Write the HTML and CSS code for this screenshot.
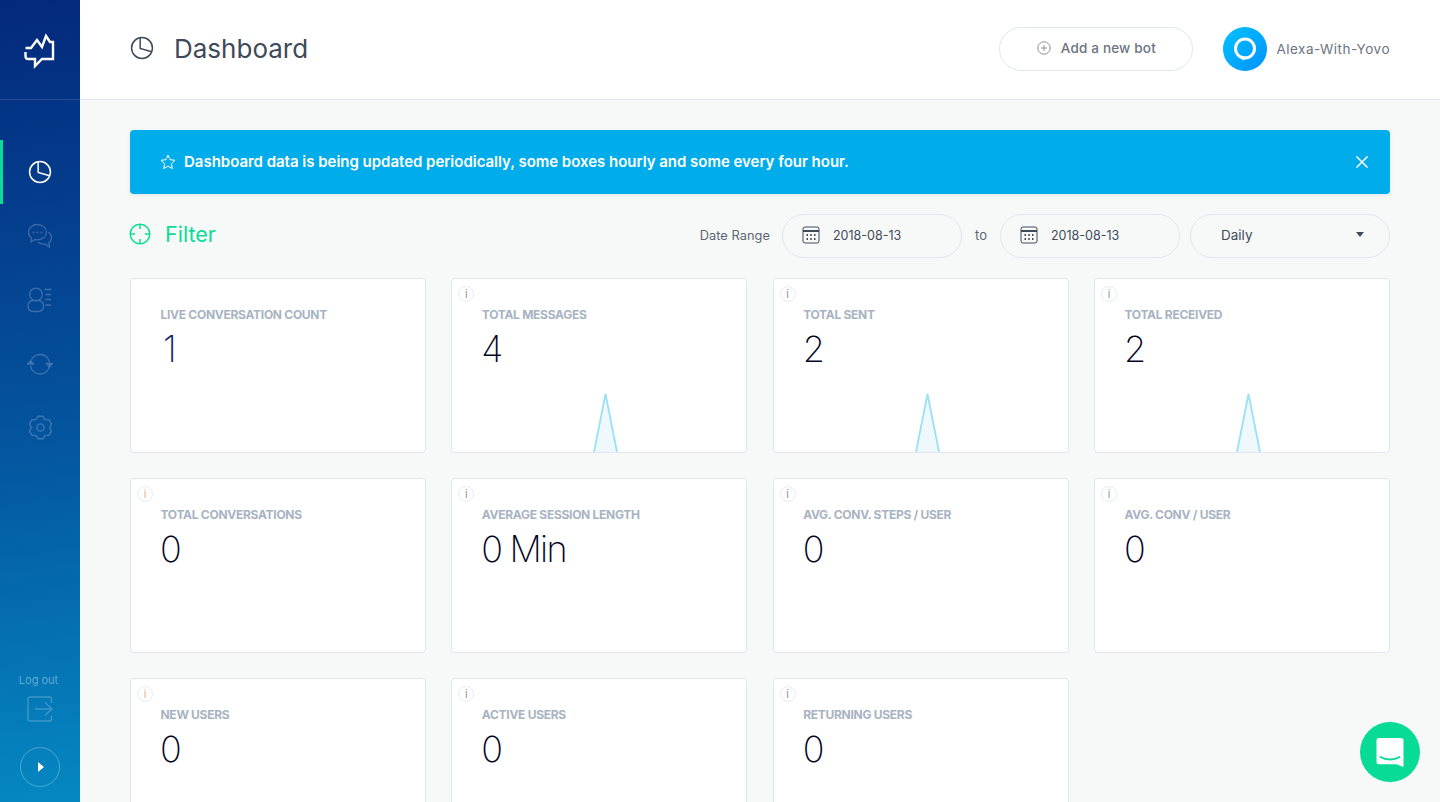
FILE: index.html
```html
<!DOCTYPE html>
<html lang="en">
<head>
<meta charset="utf-8">
<title>Dashboard</title>
<link rel="stylesheet" href="styles.css">
</head>
<body>
<div class="app">
  <aside class="sidebar">
    <div class="logo">
      <svg width="32" height="36" viewBox="0 0 32 36" fill="none" stroke="#fff" stroke-width="2.400" stroke-linejoin="miter"><path d="M1.500 15H7L13 7 18 14 22 3 26 9H29V26H18L11 33V26H4.500Q1.500 26 1.500 23V19"/></svg>
    </div>
    <nav class="nav">
      <a class="nav-item active"><svg width="24" height="24" viewBox="0 0 26 26" fill="none" stroke="#fff" stroke-width="1.600"><circle cx="13" cy="13" r="11.300"/><path d="M11 2v11.500L23.500 17"/></svg></a>
      <a class="nav-item dim"><svg width="26" height="26" viewBox="0 0 26 26" fill="none" stroke="#fff" stroke-width="1.300"><path d="M10.500 1.500C5.500 1.500 1.500 5 1.500 9.300c0 2.300 1.100 4.300 3 5.800l-.5 3.900 4-2.500c.8.200 1.600.3 2.500.3 5 0 9-3.400 9-7.500s-4-7.800-9-7.800z"/><path d="M21.500 9c2 1.400 3 3.300 3 5.500 0 2-1 3.800-2.500 5l.5 4.500-4.500-3c-2.500.3-5-.3-7-2"/><circle cx="6.500" cy="9.500" r=".4"/><circle cx="10.500" cy="9.500" r=".4"/><circle cx="14.500" cy="9.500" r=".4"/></svg></a>
      <a class="nav-item dim"><svg width="26" height="26" viewBox="0 0 26 26" fill="none" stroke="#fff" stroke-width="1.300"><circle cx="9" cy="7.500" r="6.300"/><rect x="1" y="13.500" width="15.500" height="11" rx="5"/><path d="M17.500 2.500h7M18.500 7.500h5.500M18.500 12.500h5.500M18.500 18h5.500"/></svg></a>
      <a class="nav-item dim"><svg width="26" height="26" viewBox="0 0 26 26" fill="none" stroke="#fff" stroke-width="1.300"><path d="M3.500 12C4 7 8 3.500 13 3.500c3.500 0 6.500 1.800 8.200 4.500l1.300 3.500M22.500 14.500c-.5 5-4.500 8.500-9.500 8.500-3.500 0-6.500-1.800-8.200-4.500L3.500 15"/><path d="M.8 13 3.500 10 6.500 13zM19.500 12.500h6L22.500 16z" fill="#fff"/></svg></a>
      <a class="nav-item dim gear"><svg width="25" height="25" viewBox="0 0 26 26" fill="none" stroke="#fff" stroke-width="1.400" stroke-linejoin="round"><circle cx="13" cy="13" r="3.700"/><path d="M10.500 1.260H15.500L17.750 4.770 21.920 4.970 24.410 9.290 22.500 13 24.410 16.710 21.920 21.030 17.750 21.230 15.500 24.740H10.500L8.250 21.230 4.080 21.030 1.590 16.710 3.500 13 1.590 9.290 4.080 4.970 8.250 4.770z"/></svg></a>
    </nav>
    <div class="side-foot">
      <span class="logout-label">Log out</span>
      <svg class="logout-ico" width="26" height="26" viewBox="0 0 26 26" fill="none" stroke="#fff" stroke-width="1.400"><path d="M24.500 7V3a2 2 0 0 0-2-2H3a2 2 0 0 0-2 2v20a2 2 0 0 0 2 2h19.500a2 2 0 0 0 2-2v-3"/><path d="M8 13h17M18 6.500l7 6.500-7 6.500"/></svg>
      <button class="expand"><svg width="8" height="10" viewBox="0 0 8 10"><path d="M1 0l6 5-6 5z" fill="#fff"/></svg></button>
    </div>
  </aside>
  <div class="content">
    <header class="topbar">
      <svg class="page-ico" width="24" height="24" viewBox="0 0 26 26" fill="none" stroke="#3e4a59" stroke-width="1.600"><circle cx="13" cy="13" r="11.300"/><path d="M11 2v11.500L23.500 17"/></svg>
      <h1 class="title">Dashboard</h1>
      <button class="add-bot"><svg width="14" height="14" viewBox="0 0 14 14" fill="none" stroke="#8a929c"><circle cx="7" cy="7" r="6.200"/><path d="M7 4v6M4 7h6"/></svg><span>Add a new bot</span></button>
      <div class="account">
        <span class="avatar"><svg width="26" height="28" viewBox="0 0 26 28" fill="none"><circle cx="13" cy="13.500" r="9.500" stroke="#fff" stroke-width="3"/><path d="M9.500 20.500 10.500 25.500 16 22.500z" fill="#fff"/></svg></span>
        <span class="account-name">Alexa-With-Yovo</span>
      </div>
    </header>
    <main class="main">
      <div class="banner">
        <svg width="16" height="16" viewBox="0 0 16 16" fill="none" stroke="#fff" stroke-width="1"><path d="M8 1.200l2.100 4.500 4.900.6-3.600 3.400.9 4.900L8 12.200l-4.300 2.400.9-4.900L1 6.300l4.900-.6z"/></svg>
        <span class="banner-text">Dashboard data is being updated periodically, some boxes hourly and some every four hour.</span>
        <svg class="banner-close" width="14" height="14" viewBox="0 0 14 14" stroke="#fff" stroke-width="1.500"><path d="M1.500 1.500l11 11M12.500 1.500l-11 11"/></svg>
      </div>
      <div class="filter-row">
        <svg class="filter-ico" width="22" height="22" viewBox="0 0 22 22" fill="none" stroke="#0cdc97" stroke-width="1.500"><circle cx="11" cy="11" r="9.800"/><path d="M11 1v5M11 16v5M1 11h5M16 11h5"/></svg>
        <span class="filter-label">Filter</span>
        <span class="range-label">Date Range</span>
        <div class="pill date"><svg class="cal" width="18" height="18" viewBox="0 0 18 18" fill="none" stroke="#3e4a59"><rect x="1" y="1" width="16" height="16" rx="2"/><path d="M1 5h16" stroke-width="2"/><path d="M4.500 9h1.500M8.250 9h1.500M12 9h1.500M4.500 13h1.500M8.250 13h1.500M12 13h1.500" stroke-width="1.800"/></svg><span>2018-08-13</span></div>
        <span class="to">to</span>
        <div class="pill date"><svg class="cal" width="18" height="18" viewBox="0 0 18 18" fill="none" stroke="#3e4a59"><rect x="1" y="1" width="16" height="16" rx="2"/><path d="M1 5h16" stroke-width="2"/><path d="M4.500 9h1.500M8.250 9h1.500M12 9h1.500M4.500 13h1.500M8.250 13h1.500M12 13h1.500" stroke-width="1.800"/></svg><span>2018-08-13</span></div>
        <div class="pill select"><span>Daily</span><i class="caret"></i></div>
      </div>
      <section class="cards">
        <article class="card"><h2 class="card-title">LIVE CONVERSATION COUNT</h2><div class="card-value indigo">1</div></article>
        <article class="card"><i class="info">i</i><h2 class="card-title">TOTAL MESSAGES</h2><div class="card-value">4</div><svg class="spark" width="294" height="60" viewBox="0 0 294 60"><path d="M142 60 153.500 2 165 60z" fill="#eff9fd"/><path d="M142 60 153.500 2 165 60" fill="none" stroke="#98e1f6" stroke-width="1.800"/></svg></article>
        <article class="card"><i class="info">i</i><h2 class="card-title">TOTAL SENT</h2><div class="card-value">2</div><svg class="spark" width="294" height="60" viewBox="0 0 294 60"><path d="M142 60 153.500 2 165 60z" fill="#eff9fd"/><path d="M142 60 153.500 2 165 60" fill="none" stroke="#98e1f6" stroke-width="1.800"/></svg></article>
        <article class="card"><i class="info">i</i><h2 class="card-title">TOTAL RECEIVED</h2><div class="card-value">2</div><svg class="spark" width="294" height="60" viewBox="0 0 294 60"><path d="M142 60 153.500 2 165 60z" fill="#eff9fd"/><path d="M142 60 153.500 2 165 60" fill="none" stroke="#98e1f6" stroke-width="1.800"/></svg></article>
        <article class="card"><i class="info warm">i</i><h2 class="card-title">TOTAL CONVERSATIONS</h2><div class="card-value">0</div></article>
        <article class="card"><i class="info">i</i><h2 class="card-title">AVERAGE SESSION LENGTH</h2><div class="card-value">0 Min</div></article>
        <article class="card"><i class="info">i</i><h2 class="card-title">AVG. CONV. STEPS / USER</h2><div class="card-value">0</div></article>
        <article class="card"><i class="info">i</i><h2 class="card-title">AVG. CONV / USER</h2><div class="card-value">0</div></article>
        <article class="card"><i class="info warm">i</i><h2 class="card-title">NEW USERS</h2><div class="card-value">0</div></article>
        <article class="card"><i class="info">i</i><h2 class="card-title">ACTIVE USERS</h2><div class="card-value">0</div></article>
        <article class="card"><i class="info">i</i><h2 class="card-title">RETURNING USERS</h2><div class="card-value">0</div></article>
      </section>
    </main>
  </div>
</div>
<button class="chat"><svg width="28" height="30" viewBox="0 0 28 30"><path d="M3 1h22a2.500 2.500 0 0 1 2.500 2.500V30l-7-2.800H3A2.500 2.500 0 0 1 .5 24.700V3.500A2.500 2.500 0 0 1 3 1z" fill="#fff"/><path d="M4.500 20c5.500 3.300 13.500 3.300 19 0" fill="none" stroke="#08db96" stroke-width="1.800" stroke-linecap="round"/></svg></button>
</body>
</html>
```

FILE: styles.css
```css
* { box-sizing: border-box; }
html, body { margin: 0; height: 100%; overflow: hidden; }
body { font-family: Inter, "Liberation Sans", sans-serif; color: #3e4a59; background: #f7f9f9; }
.app { display: flex; height: 802px; overflow: hidden; }

.sidebar { width: 80px; flex: none; display: flex; flex-direction: column; align-items: stretch; background: linear-gradient(172deg, #04297c 0%, #04509b 50%, #0588c2 100%); }
.logo { height: 100px; flex: none; display: flex; align-items: center; justify-content: center; border-bottom: 1px solid rgba(255,255,255,.13); padding-top: 3px; }
.nav { display: flex; flex-direction: column; margin-top: 40px; }
.nav-item { height: 64px; display: flex; align-items: center; justify-content: center; border-left: 3px solid transparent; padding-right: 3px; }
.nav-item.active { border-left-color: #0cdc97; }
.nav-item.dim svg { opacity: .22; }
.nav-item.gear { padding-bottom: 2px; }
.side-foot { margin-top: auto; display: flex; flex-direction: column; align-items: center; padding-bottom: 15px; }
.logout-label { font-size: 11px; color: rgba(255,255,255,.38); line-height: 16px; margin-left: -3px; }
.logout-ico { opacity: .22; margin-top: 8px; }
.expand { width: 40px; height: 40px; margin-top: 25px; border-radius: 50%; border: 1px solid rgba(255,255,255,.28); background: none; padding: 0 0 0 1px; display: flex; align-items: center; justify-content: center; }

.content { flex: 1; min-width: 0; display: flex; flex-direction: column; }
.topbar { height: 100px; flex: none; display: flex; align-items: center; background: #fff; border-bottom: 1px solid #e1e7ec; padding: 0 50px; }
.page-ico { margin-bottom: 4px; }
.title { font-size: 26px; font-weight: 400; color: #3e4a59; margin: 0 0 3px 20px; letter-spacing: 0; }
.add-bot { margin-left: auto; width: 194px; height: 44px; margin-bottom: 2px; border: 1px solid #e1e7ec; border-radius: 22px; background: #fff; display: flex; align-items: center; justify-content: center; gap: 10px; font: 500 13.500px Inter, sans-serif; color: #6b7480; padding: 0 0 2px; letter-spacing: .18px; }
.account { display: flex; align-items: center; margin-left: 30px; margin-bottom: 2px; }
.avatar { width: 44px; height: 44px; border-radius: 50%; background: linear-gradient(135deg, #00c4ff, #0090ff); display: flex; align-items: center; justify-content: center; }
.account-name { font-size: 13.500px; color: #6b7480; margin-left: 9px; letter-spacing: .5px; }

.main { padding: 30px 50px 0; }
.banner { height: 64px; display: flex; align-items: center; padding: 0 20px 0 30px; background: #00acea; border-radius: 4px; box-shadow: 0 2px 4px rgba(0,60,100,.08); color: #fff; }
.banner-text { font-size: 15px; font-weight: 600; margin: 0 0 2px 8px; letter-spacing: -.02px; }
.banner-close { margin-left: auto; margin-right: 1px; }
.filter-row { height: 44px; margin: 20px 0; display: flex; align-items: center; font-size: 13px; }
.filter-ico { margin: 0 0 5px -1px; }
.filter-label { font-size: 21.500px; color: #0cdc97; margin: 0 0 5px 14px; }
.range-label { margin: 0 12px 2px auto; font-size: 12.800px; color: #5c6672; letter-spacing: .05px; }
.pill { height: 44px; border: 1px solid #e1e7ec; border-radius: 22px; display: flex; align-items: center; font-size: 12.500px; color: #3e4a59; padding-bottom: 2px; }
.pill.date { width: 180px; padding-left: 19px; }
.cal { margin-right: 13px; }
.to { width: 38px; text-align: center; color: #5c6672; margin-bottom: 2px; }
.pill.select { width: 200px; margin-left: 10px; padding: 0 25px 3px 30px; justify-content: space-between; font-size: 13.500px; }
.caret { border: 4.500px solid transparent; border-top: 5px solid #3e4a59; border-bottom: 0; }

.cards { display: grid; grid-template-columns: repeat(4, 296px); justify-content: space-between; row-gap: 25px; }
.card { position: relative; height: 175px; display: flex; flex-direction: column; padding-top: 28px; background: #fff; border: 1px solid #e1e7ec; border-radius: 4px; overflow: hidden; }
.card-title { margin: 0 0 0 29.500px; font-size: 12px; line-height: 16px; font-weight: 700; color: #a8b3c1; letter-spacing: -.28px; }
.card-value { margin: 6px 0 0 29px; font-size: 36px; line-height: 40px; font-weight: 200; font-family: Inter, sans-serif; color: #05051f; letter-spacing: -1.800px; }
.card-value.indigo { color: #141a6b; padding-left: 3px; }
.spark { display: block; margin-top: auto; }
.info { position: absolute; left: 6px; top: 7px; width: 16px; height: 16px; border: 1px solid #e9ecef; border-radius: 50%; font: 300 11px/14px Inter, sans-serif; text-align: center; color: #6c7680; }
.info.warm { color: #d99a70; }
.chat { position: fixed; right: 20px; bottom: 20px; width: 60px; height: 60px; border-radius: 50%; border: 0; padding: 0; background: #08db96; display: flex; align-items: center; justify-content: center; }
```
